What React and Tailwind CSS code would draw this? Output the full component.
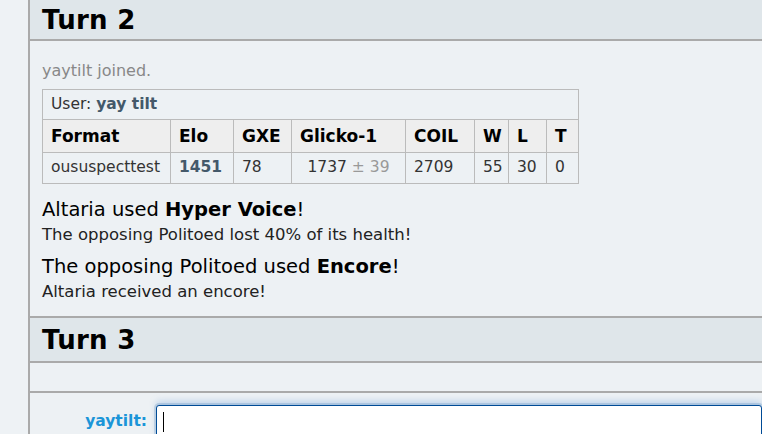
import React from 'react';

const font = { fontFamily: '"DejaVu Sans", Verdana, sans-serif' };

const cols = [
  { label: 'Format', w: 'w-[128px]' },
  { label: 'Elo', w: 'w-[63px]' },
  { label: 'GXE', w: 'w-[58px]' },
  { label: 'Glicko-1', w: 'w-[114px]' },
  { label: 'COIL', w: 'w-[69px]' },
  { label: 'W', w: 'w-[34px]' },
  { label: 'L', w: 'w-[38px]' },
  { label: 'T', w: 'w-[32px]' },
];

const TurnHeader = ({ n, h }) => (
  <div className={`${h} shrink-0 bg-[#dfe6ea] border-b-2 border-[#aaaaaa] pl-3 flex items-center`}>
    <h2 className="text-[26px] font-bold text-black leading-none tracking-[0.3px]">Turn {n}</h2>
  </div>
);

const cell = 'border border-[#bbbbbb] px-2 leading-none whitespace-nowrap';

export default function App() {
  return (
    <div className="w-[762px] h-[434px] overflow-hidden bg-[#eef2f5] flex" style={font}>
      {/* left gutter */}
      <div className="w-[28px] shrink-0 bg-[#eef2f5]" />

      <div className="flex-1 border-l-2 border-[#aaaaaa] bg-[#edf1f4] flex flex-col">
        <TurnHeader n={2} h="h-[41px]" />

        <div className="shrink-0 pl-3 pt-[19px] pb-[12px] border-b-2 border-[#aaaaaa]">
          <div className="text-[16px] text-[#888888] leading-[22px]">yaytilt joined.</div>

          <table className="mt-[7px] w-[536px] table-fixed border-collapse text-[15.5px] text-[#333]">
            <colgroup>
              {cols.map((c) => (
                <col key={c.label} className={c.w} />
              ))}
            </colgroup>
            <tbody>
              <tr>
                <td colSpan={8} className={`${cell} h-[30px]`}>
                  User: <strong className="text-[#44596a]">yay tilt</strong>
                </td>
              </tr>
              <tr className="bg-[#eeeeee]">
                {cols.map((c) => (
                  <th key={c.label} className={`${cell} h-[33px] text-left text-[17px] font-bold text-black`}>
                    {c.label}
                  </th>
                ))}
              </tr>
              <tr>
                <td className={`${cell} h-[31px]`}>oususpecttest</td>
                <td className={`${cell} font-bold text-[#44596a]`}>1451</td>
                <td className={cell}>78</td>
                <td className={`${cell} text-center`}>
                  1737 <span className="text-[#999999]">± 39</span>
                </td>
                <td className={cell}>2709</td>
                <td className={cell}>55</td>
                <td className={cell}>30</td>
                <td className={cell}>0</td>
              </tr>
            </tbody>
          </table>

          <div className="mt-[13px] text-[19.5px] text-black leading-[26px]">
            Altaria used <strong>Hyper Voice</strong>!
          </div>
          <div className="text-[16.5px] text-[#222] leading-[24px]">The opposing Politoed lost 40% of its health!</div>

          <div className="mt-[7px] text-[19.5px] text-black leading-[26px]">
            The opposing Politoed used <strong>Encore</strong>!
          </div>
          <div className="text-[16.5px] text-[#222] leading-[24px]">Altaria received an encore!</div>
        </div>

        <TurnHeader n={3} h="h-[45px]" />
        <div className="h-[30px] shrink-0 border-b-2 border-[#aaaaaa]" />

        {/* chat */}
        <div className="shrink-0 flex items-start pt-[12px]">
          <label className="w-[126px] shrink-0 text-right pr-[9px] text-[15.5px] font-bold text-[#1b95d8] pt-[5px]">
            yaytilt:
          </label>
          <div className="flex-1 h-[34px] bg-white border border-[#004b96] rounded-[3px] shadow-[0_0_0_2px_rgba(0,75,150,0.15),0_-4px_6px_rgba(110,160,220,0.35)] px-[6px] flex items-center">
            <span className="w-[1px] h-[20px] bg-black" />
          </div>
        </div>
      </div>
    </div>
  );
}
